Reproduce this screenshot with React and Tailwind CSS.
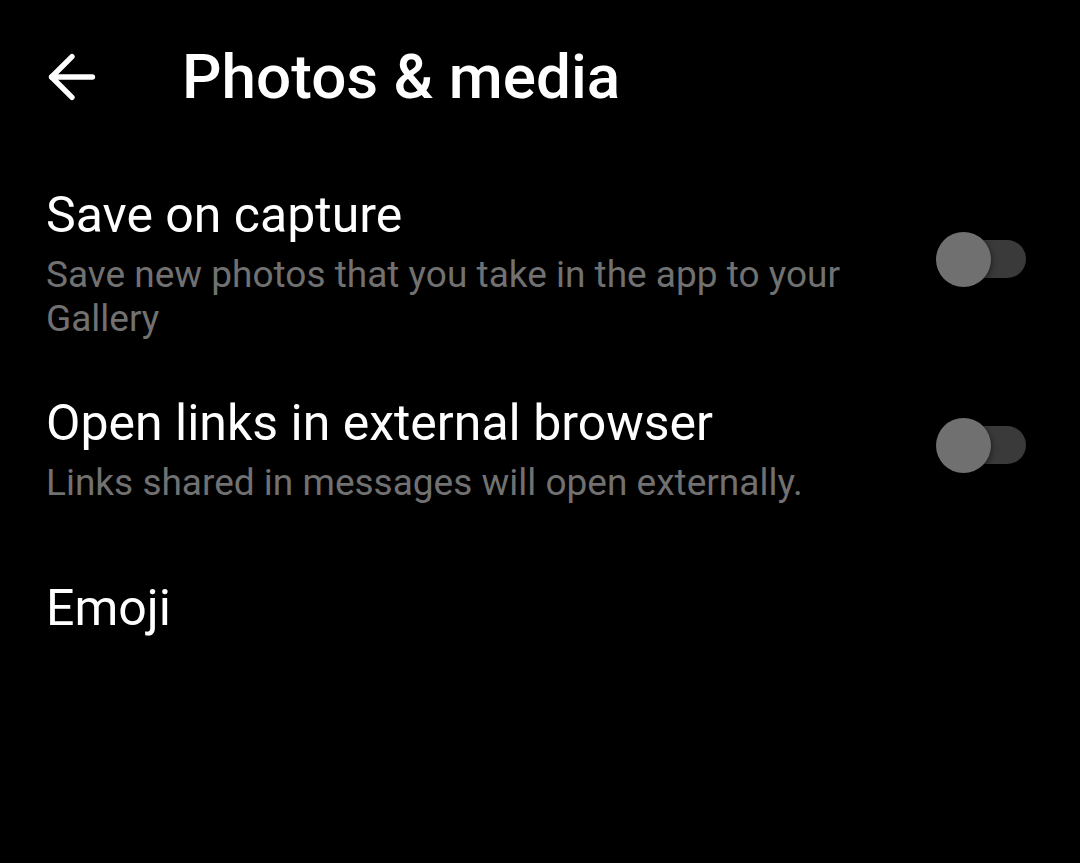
import { ArrowLeft } from "lucide-react";

function Toggle({ className }) {
  return (
    <div className={"relative w-[90px] h-[55px] shrink-0 " + className}>
      <div className="absolute right-0 top-[8px] h-[38px] w-[78px] rounded-full bg-[#3a3a3a]" />
      <div className="absolute left-0 top-0 h-[55px] w-[55px] rounded-full bg-[#707070] shadow-[0_2px_6px_rgba(0,0,0,0.6)]" />
    </div>
  );
}

function Row({ title, sub, children }) {
  return (
    <div className="flex items-center justify-between pr-[54px]">
      <div className="flex flex-col">
        <div className="text-[50px] leading-[60px] text-white">{title}</div>
        {sub && <div className="mt-[8px] text-[37px] leading-[44px] text-[#717171] max-w-[810px]">{sub}</div>}
      </div>
      {children}
    </div>
  );
}

export default function App() {
  return (
    <div className="w-[1080px] h-[863px] bg-black overflow-hidden font-['Roboto',sans-serif]">
      <div className="flex items-center h-[155px] pl-[37px] pb-[2px]">
        <ArrowLeft size={70} strokeWidth={1.85} color="white" />
        <div className="ml-[75px] text-[62px] font-medium text-white">Photos &amp; media</div>
      </div>
      <div className="pl-[46px] pt-[30px] flex flex-col">
        <Row title="Save on capture" sub="Save new photos that you take in the app to your Gallery">
          <Toggle className="mb-[8px]" />
        </Row>
        <div className="h-[52px]" />
        <Row title="Open links in external browser" sub="Links shared in messages will open externally.">
          <Toggle className="mb-[8px]" />
        </Row>
        <div className="h-[73px]" />
        <Row title="Emoji" />
      </div>
    </div>
  );
}
